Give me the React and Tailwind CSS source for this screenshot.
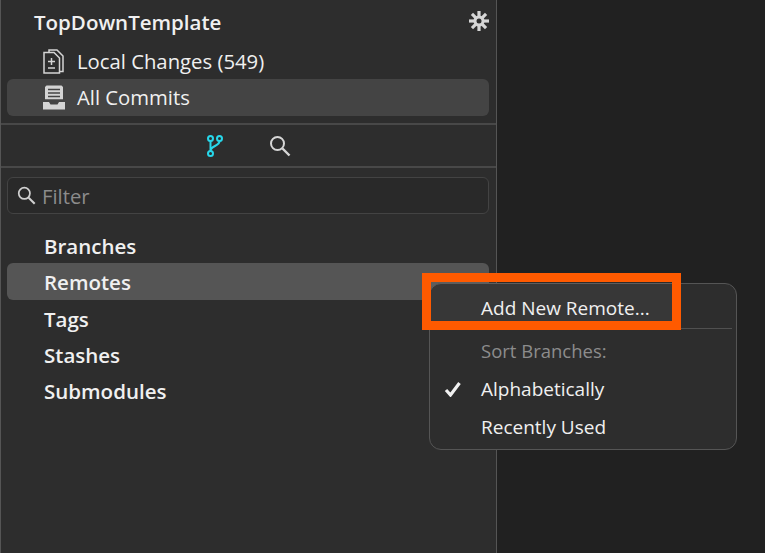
import React from "react";

const font = { fontFamily: '"Open Sans", "Noto Sans", sans-serif' };

const LocalChangesIcon = () => (
  <svg width="21" height="25" viewBox="0 0 21 25" fill="none" stroke="#d4d4d4" strokeWidth="1.500">
    <path d="M6 3V1h8l6 6v15.500h-3" />
    <path d="M1 3.500h10l5.500 5.500v15H1z" />
    <path d="M5 12.500h7M8.500 9v7M5 19h7" />
  </svg>
);

const AllCommitsIcon = () => (
  <svg width="22" height="25" viewBox="0 0 22 25" fill="none">
    <path d="M3.500 0.500h15L20 2v13H2V2z" fill="#d4d4d4" />
    <path d="M5 4.500h12M5 8h12M5 11.500h12" stroke="#444444" strokeWidth="1.500" />
    <path d="M2 15h18" stroke="#444444" strokeWidth="1.500" />
    <path d="M0 17h6l1.500 2.500h7L16 17h6v7.500H0z" fill="#d4d4d4" />
  </svg>
);

const BranchIcon = () => (
  <svg width="16" height="22" viewBox="0 0 16 22" fill="none" stroke="#27d7ea" strokeWidth="2">
    <circle cx="3.500" cy="3.500" r="2.500" />
    <circle cx="12.500" cy="3.500" r="2.500" />
    <circle cx="3.500" cy="18.500" r="2.500" />
    <path d="M3.500 6v10M12.500 6c0 5.500-9 4.500-9 10" />
  </svg>
);

const SearchIcon = ({ size, color }) => (
  <svg width={size} height={size} viewBox="0 0 22 22" fill="none" stroke={color} strokeWidth="2">
    <circle cx="8.500" cy="8.500" r="6.500" />
    <path d="M13.500 13.500l7 7" strokeWidth="2.400" />
  </svg>
);

const GearIcon = () => (
  <svg width="20" height="20" viewBox="0 0 20 20">
    {[0, 45, 90, 135].map((deg) => (
      <rect key={deg} x="8.400" y="0" width="3.200" height="20" fill="#d6d6d6" transform={`rotate(${deg} 10 10)`} />
    ))}
    <circle cx="10" cy="10" r="5.500" fill="#d6d6d6" />
    <circle cx="10" cy="10" r="2.500" fill="#2d2d2d" />
  </svg>
);

const CheckIcon = () => (
  <svg width="18" height="16" viewBox="0 0 18 16" fill="none" stroke="#f0f0f0" strokeWidth="3.200">
    <path d="M2 9l4.500 5L15.500 2" />
  </svg>
);

const App = () => {
  const sections = ["Branches", "Remotes", "Tags", "Stashes", "Submodules"];

  return (
    <div className="relative flex h-[553px] w-[765px] overflow-hidden bg-[#212121] text-[#f0f0f0]" style={font}>
      {/* Sidebar */}
      <div className="flex h-full w-[497px] flex-col border-x border-x-[#555555] bg-[#2d2d2d]">
        <div className="flex h-[43px] items-center justify-between pl-[33px] pr-[7px] pt-[1px]">
          <span className="text-[20.500px] font-semibold">TopDownTemplate</span>
          <span className="mb-[3px]"><GearIcon /></span>
        </div>
        <div className="flex h-[36px] items-center gap-[13px] px-[42px] pt-[1px] text-[20.300px]">
          <LocalChangesIcon />
          <span>Local Changes (549)</span>
        </div>
        <div className="ml-[6px] mr-[7px] flex h-[37px] items-center gap-[12px] rounded-md bg-[#444444] px-[36px] text-[20.300px]">
          <AllCommitsIcon />
          <span>All Commits</span>
        </div>

        <div className="mt-[7px] flex h-[45px] items-center gap-[46px] border-y-2 border-y-[#484848] pl-[206px]">
          <BranchIcon />
          <SearchIcon size={22} color="#d6d6d6" />
        </div>

        <div className="ml-[6px] mr-[7px] mt-[9px] flex h-[37px] items-center gap-[6px] rounded-md border border-[#434343] bg-[#292929] px-[9px]">
          <SearchIcon size={19} color="#d0d0d0" />
          <span className="pt-[1px] text-[20.300px] text-[#8c8c8c]">Filter</span>
        </div>

        <div className="mt-[13px] flex flex-col">
          {sections.map((name) => (
            <div
              key={name}
              className={`ml-[6px] mr-[7px] flex h-[36.400px] items-center rounded-md px-[37px] pt-[2px] text-[20.500px] font-semibold ${
                name === "Remotes" ? "bg-[#555555]" : ""
              }`}
            >
              {name}
            </div>
          ))}
        </div>
      </div>

      {/* Context menu */}
      <div className="absolute left-[429px] top-[283px] flex h-[167px] w-[308px] flex-col rounded-xl border border-[#555555] bg-[#2d2d2d] px-[4px] pt-[1px] text-[19px]">
        <div className="flex h-[43px] items-center pl-[47px] pt-[3px]">Add New Remote...</div>
        <div className="mb-[3px] h-px bg-[#505050]" />
        <div className="flex h-[38px] items-center pl-[47px] text-[18.500px] text-[#8c8c8c]">Sort Branches:</div>
        <div className="flex h-[38px] items-center pl-[10px]">
          <span className="flex w-[37px] items-center"><CheckIcon /></span>
          <span>Alphabetically</span>
        </div>
        <div className="flex h-[38px] items-center pl-[47px]">Recently Used</div>
      </div>

      {/* Orange highlight */}
      <div className="absolute left-[422px] top-[273px] h-[57px] w-[259px] border-[9px] border-[#ff5a00] bg-clip-padding bg-[#ffffff0d]" />
    </div>
  );
};

export default App;
